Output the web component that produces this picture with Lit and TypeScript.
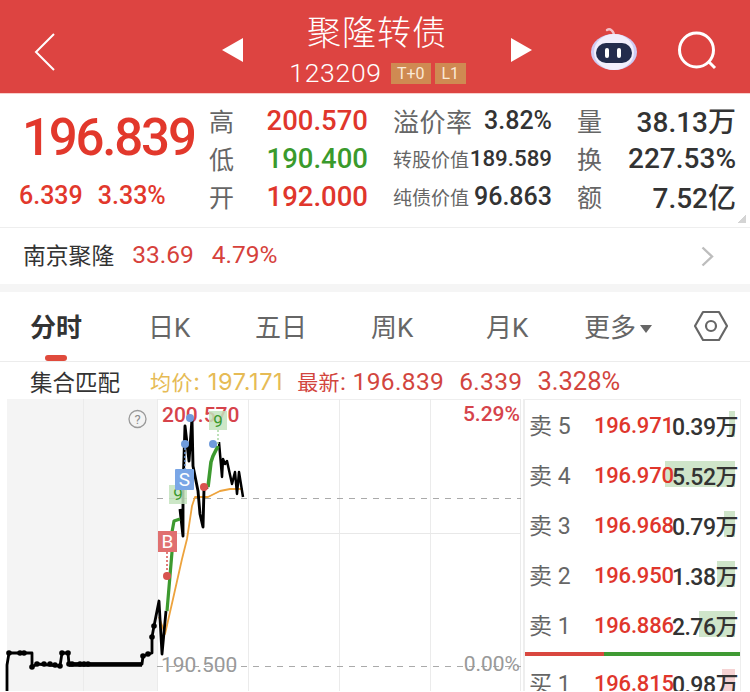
import { LitElement, html, css, svg } from "lit";
import { customElement } from "lit/decorators.js";

const asks = [
  ["卖 5", "196.971", "0.39万", 6],
  ["卖 4", "196.970", "5.52万", 70],
  ["卖 3", "196.968", "0.79万", 11],
  ["卖 2", "196.950", "1.38万", 18],
  ["卖 1", "196.886", "2.76万", 36],
] as const;

const black1 = "7,692 7,666 9,654 32,654 32,668 37,665 60,667 62,654 68,654 69,665 142,665 143,657 152,654 152,638 154,627 159,602 162,655 166,612";
const black3 = "180,510 183,537 183,490 185,427 189,462 192,420 193,467 198,492 200,515 203,528 204,490 208,488";
const black4 = "219,443 222,478 223,460 225,465 227,462 232,485 235,473 237,495 239,473 243,498";
const green1 = "167,612 172,553 172,533 174,522 180,520";
const green2 = "208,488 211,463 213,457 218,447";
const avg = "159,618 165,635 173,600 182,560 187,540 192,507 195,498 208,498 220,492 230,490 243,490";

@customElement("app-root")
export class AppRoot extends LitElement {
  static styles = css`
    :host { display: block; width: 750px; height: 692px; overflow: hidden; background: #fff; font-family: "Roboto", "Noto Sans CJK SC", sans-serif; }
    .header { height: 93px; background: #dd4441; display: grid; grid-template-columns: 222px 310px 218px; align-items: center; color: #fff; border-bottom: 1px solid #f9cfcb; }
    .back { margin-left: 34px; width: 22px; height: 38px; margin-top: 10px; }
    .nav { display: flex; justify-content: space-between; align-items: center; margin-top: 7px; }
    .mid { display: flex; flex-direction: column; align-items: center; }
    .title { font-size: 34px; line-height: 42px; letter-spacing: 1px; font-weight: 300; }
    .code { display: flex; align-items: center; gap: 4px; font-size: 26.5px; line-height: 30px; font-weight: 300; margin-top: 4px; letter-spacing: 0.7px; margin-left: 1px; }
    .code .num { margin-right: 5px; }
    .badge { background: #cf8a52; color: #fbe9d6; font-size: 16px; line-height: 21px; height: 21px; letter-spacing: 0; font-weight: 400; text-align: center; }
    .badge.w { width: 40px; }
    .badge.n { width: 31px; }
    .tools { display: flex; align-items: center; margin-left: 58px; gap: 38px; margin-top: 7px; }
    .quote { height: 133px; display: grid; grid-template-columns: 209px 184px 184px 173px; border-bottom: 1px solid #eeeeee; position: relative; }
    .price { display: flex; flex-direction: column; color: #e2382c; font-weight: 500; }
    .big { font-size: 51px; line-height: 56px; letter-spacing: -2.2px; margin: 16px 0 0 22px; }
    .chg { font-size: 25px; line-height: 30px; display: flex; gap: 15px; margin: 15px 0 0 19px; font-weight: 500; }
    .col { display: flex; flex-direction: column; padding-top: 7px; }
    .kv { height: 38px; display: flex; justify-content: space-between; align-items: center; white-space: nowrap; }
    .k { font-size: 25px; color: #666; }
    .k.m { font-size: 26px; letter-spacing: 0.5px; }
    .k.s { font-size: 19px; }
    .col:nth-child(2) { padding-right: 25px; }
    .col:nth-child(3) { padding-right: 25px; }
    .col:nth-child(4) { padding-right: 14px; }
    .v { font-size: 27.5px; font-weight: 500; }
    .up { color: #e0362c; } .down { color: #3a9a2c; }
    .dark { color: #333; font-weight: 500; }
    .f25 { font-size: 25px; } .f22 { font-size: 22.3px; }
    .f28 { font-size: 28px; }
    .corner { position: absolute; right: 4px; bottom: 4px; width: 8px; height: 8px; background: linear-gradient(135deg, transparent 50%, #d4d4d4 50%); }
    .related { height: 53px; padding: 0 36px 3px 23px; display: flex; align-items: center; font-size: 24.5px; gap: 18px; border-bottom: 8px solid #f5f5f5; }
    .related .n { color: #333; font-size: 22.8px; }
    .related .r { color: #d6413b; }
    .related svg { margin-left: auto; margin-top: 3px; }
    .tabs { height: 69px; position: relative; border-bottom: 1px solid #ececec; font-size: 26px; color: #666; }
    .tab { position: absolute; top: 13px; line-height: 46px; white-space: nowrap; }
    .tab.on { color: #333; font-weight: 700; }
    .bar { position: absolute; left: 45px; bottom: 0; width: 22px; height: 6px; border-radius: 3px; background: #e04a3c; }
    .arrow { display: inline-block; margin-left: 4px; vertical-align: 4px; width: 0; height: 0; border-left: 6.5px solid transparent; border-right: 6.5px solid transparent; border-top: 8px solid #666; }
    .gear { position: absolute; left: 694px; top: 18px; }
    .info { height: 38px; display: flex; align-items: center; padding-left: 30px; font-size: 24.5px; color: #d2453e; white-space: nowrap; margin-bottom: -1px; }
    .info .t { color: #333; font-size: 22.5px; margin-right: 30px; }
    .info .a { color: #e6bb55; margin-right: 14px; font-family: "Inter", "Noto Sans CJK SC", sans-serif; font-size: 23.5px; letter-spacing: 0.6px; }
    .info .c { font-size: 21px; }
    .info .g { margin-right: 15px; letter-spacing: 0.35px; }
    .info .w { font-size: 25.5px; }
    .body { display: flex; height: 292px; }
    .chart { width: 523px; flex: none; height: 292px; display: block; }
    .chart text { font-family: "Roboto", sans-serif; }
    .book { width: 218px; height: 292px; border-left: 2px solid #eeeeee; border-right: 1px solid #eeeeee; border-top: 1px solid #eeeeee; box-sizing: border-box; overflow: hidden; }
    .row { height: 50px; display: grid; grid-template-columns: 69px 74px 1fr; align-items: center; position: relative; }
    .row .l { font-size: 23px; color: #666; padding: 0 0 2px 4px; white-space: nowrap; }
    .row .p { font-size: 22px; color: #e0362c; font-weight: 500; letter-spacing: -0.2px; position: relative; }
    .row .q { font-size: 23px; color: #333; font-weight: 500; text-align: right; padding: 0 2px 1px 0; position: relative; white-space: nowrap; letter-spacing: -0.5px; }
    .fill { position: absolute; right: 5px; top: 11px; height: 26px; background: #cfe5ca; }
    .fill.pink { background: #f5d3d3; }
    .ratio { height: 4px; margin: 2px 0; background: linear-gradient(90deg, #d9473f 0 36.6%, #3f9a33 36.6% 100%); }
  `;

  private row(r: readonly [string, string, string, number], pink = false) {
    return html`<div class="row">
      <span class="l">${r[0]}</span>
      <span class="fill ${pink ? "pink" : ""}" style="width:${r[3]}px"></span>
      <span class="p">${r[1]}</span>
      <span class="q">${r[2]}</span>
    </div>`;
  }

  private chart() {
    const line = (pts: string, c: string, w: number) =>
      svg`<polyline points=${pts} fill="none" stroke=${c} stroke-width=${w} stroke-linejoin="round" />`;
    const dot = (x: number, y: number, c: string) => svg`<circle cx=${x} cy=${y} r="4" fill=${c} />`;
    const ticks = [[9, 654], [20, 654], [24, 654], [32, 668], [37, 665], [44, 665], [50, 665], [55, 666], [60, 667], [62, 654], [68, 654], [69, 665], [72, 665], [80, 665], [84, 665], [88, 665], [143, 657], [148, 655], [152, 638], [154, 627]];
    return html`<svg class="chart" viewBox="0 400 523 292" xmlns="http://www.w3.org/2000/svg">
      <rect x="7" y="400" width="150" height="292" fill="#f4f4f4" />
      <rect x="157" y="400" width="364" height="1" fill="#eee" />
      <path d="M83.5 400V692M157.5 400V692M248.5 400V692M339.5 400V692M430.5 400V692M520.5 400V692" stroke="#ebebeb" fill="none" />
      <path d="M157 534.5H521" stroke="#e8e8e8" fill="none" />
      <path d="M157 499.5H521M157 667.5H521" stroke="#aaa" stroke-dasharray="6 6" fill="none" />
      <text x="162" y="423" font-size="21" font-weight="500" fill="#d6434b">200.570</text>
      ${line(avg, "#eda33d", 1.8)}
      ${line(black1, "#000", 2.8)}
      ${line(black3, "#000", 2.9)}
      ${line(black4, "#000", 2.5)}
      ${line(green1, "#3d9a2f", 3.2)}
      ${line(green2, "#3d9a2f", 3.6)}
      ${ticks.map(([a, b]) => svg`<circle cx=${a} cy=${b} r="2.8" fill="#000" />`)}
      <path d="M69 665.5H142" stroke="#000" stroke-width="4.5" />
      ${dot(190, 419, "#6f9bdc")}
      ${dot(185, 445, "#6f9bdc")}
      ${dot(213, 445, "#6f9bdc")}
      ${dot(204, 488, "#d8534f")}
      ${dot(167, 577, "#d8534f")}
      <path d="M185 449V470" stroke="#6f9bdc" stroke-width="1.5" stroke-dasharray="2 2" />
      <path d="M167 553V575" stroke="#d8534f" stroke-width="1.5" stroke-dasharray="2 2" />
      <path d="M218 431V445" stroke="#a9d8a2" stroke-width="1.5" stroke-dasharray="2 2" />
      <rect x="169" y="486" width="18" height="19" fill="#c3e3bd" opacity="0.85" />
      <rect x="209" y="412" width="18" height="19" fill="#c3e3bd" opacity="0.85" />
      <text x="178" y="501" text-anchor="middle" font-size="17" fill="#3d9a2f">9</text>
      <text x="218" y="428" text-anchor="middle" font-size="17" fill="#3d9a2f">9</text>
      <rect x="175" y="470" width="19" height="21" rx="1" fill="#7aa6e6" />
      <text x="184.5" y="487" text-anchor="middle" font-size="19" fill="#fff">S</text>
      <rect x="158" y="532" width="19" height="21" fill="#e07070" />
      <text x="167.5" y="549" text-anchor="middle" font-size="19" fill="#fff">B</text>
      <text x="520" y="422" text-anchor="end" font-size="21" font-weight="500" fill="#d6434b">5.29%</text>
      <text x="161" y="673" font-size="21" fill="#999">190.500</text>
      <text x="520" y="672" text-anchor="end" font-size="21" fill="#999">0.00%</text>
      <circle cx="137.5" cy="420" r="8.5" fill="none" stroke="#9a9a9a" stroke-width="1.3" />
      <text x="137.5" y="425" text-anchor="middle" font-size="13" fill="#8c8c8c">?</text>
    </svg>`;
  }

  render() {
    return html`
      <div class="header">
        <svg class="back" viewBox="0 0 22 38"><path d="M20 1L2 19L20 37" fill="none" stroke="#fff" stroke-width="2" /></svg>
        <div class="nav">
          <svg width="21" height="24" viewBox="0 0 21 24"><path d="M21 0V24L0 12Z" fill="#fff" /></svg>
          <div class="mid">
            <div class="title">聚隆转债</div>
            <div class="code"><span class="num">123209</span><span class="badge w">T+0</span><span class="badge n">L1</span></div>
          </div>
          <svg width="21" height="24" viewBox="0 0 21 24"><path d="M0 0V24L21 12Z" fill="#fff" /></svg>
        </div>
        <div class="tools">
          <svg width="48" height="48" viewBox="0 0 48 48">
            <path d="M17 4C20 2 24 5 24 10" fill="none" stroke="#f3c0c8" stroke-width="2.4" stroke-linecap="round" />
            <ellipse cx="24" cy="26" rx="23" ry="18" fill="#cfcbf3" />
            <ellipse cx="24" cy="26" rx="20" ry="18" fill="#f1eefc" />
            <rect x="6" y="17" width="36" height="20" rx="10" fill="#232c4d" />
            <rect x="15" y="22" width="4" height="10" rx="2" fill="#fff" />
            <rect x="27" y="22" width="4" height="10" rx="2" fill="#fff" />
          </svg>
          <svg width="42" height="42" viewBox="0 0 42 42"><circle cx="20.5" cy="21" r="17" fill="none" stroke="#fff" stroke-width="3" /><path d="M33 33L39 39" stroke="#fff" stroke-width="3" /></svg>
        </div>
      </div>
      <div class="quote">
        <div class="price">
          <div class="big">196.839</div>
          <div class="chg"><span>6.339</span><span>3.33%</span></div>
        </div>
        <div class="col">
          <div class="kv"><span class="k">高</span><span class="v up">200.570</span></div>
          <div class="kv"><span class="k">低</span><span class="v down">190.400</span></div>
          <div class="kv"><span class="k">开</span><span class="v up">192.000</span></div>
        </div>
        <div class="col">
          <div class="kv"><span class="k m">溢价率</span><span class="dark f25">3.82%</span></div>
          <div class="kv"><span class="k s">转股价值</span><span class="dark f22">189.589</span></div>
          <div class="kv"><span class="k s">纯债价值</span><span class="dark f25">96.863</span></div>
        </div>
        <div class="col">
          <div class="kv"><span class="k">量</span><span class="dark f28">38.13万</span></div>
          <div class="kv"><span class="k">换</span><span class="dark f28">227.53%</span></div>
          <div class="kv"><span class="k">额</span><span class="dark f28">7.52亿</span></div>
        </div>
        <span class="corner"></span>
      </div>
      <div class="related">
        <span class="n">南京聚隆</span><span class="r">33.69</span><span class="r">4.79%</span>
        <svg width="13" height="21" viewBox="0 0 13 21"><path d="M1.5 1.5L11 10.5L1.5 19.5" fill="none" stroke="#bdbdbd" stroke-width="2.4" /></svg>
      </div>
      <div class="tabs">
        <span class="tab on" style="left:30px">分时</span>
        <span class="tab" style="left:148px">日K</span>
        <span class="tab" style="left:255px">五日</span>
        <span class="tab" style="left:371px">周K</span>
        <span class="tab" style="left:486px">月K</span>
        <span class="tab" style="left:584px">更多<i class="arrow"></i></span>
        <svg class="gear" width="34" height="32" viewBox="0 0 34 32"><path d="M9 2H25L33 16L25 30H9L1 16Z" fill="none" stroke="#666" stroke-width="2.2" stroke-linejoin="round" /><circle cx="17" cy="16" r="5" fill="none" stroke="#666" stroke-width="2.2" /></svg>
        <span class="bar"></span>
      </div>
      <div class="info">
        <span class="t">集合匹配</span><span class="a"><span class="c">均价</span>: 197.171</span><span class="g"><span class="c">最新</span>: 196.839</span><span class="g">6.339</span><span class="w">3.328%</span>
      </div>
      <div class="body">
        ${this.chart()}
        <div class="book">
          ${asks.map((r) => this.row(r))}
          <div class="ratio"></div>
          ${this.row(["买 1", "196.815", "0.98万", 13], true)}
        </div>
      </div>
    `;
  }
}
